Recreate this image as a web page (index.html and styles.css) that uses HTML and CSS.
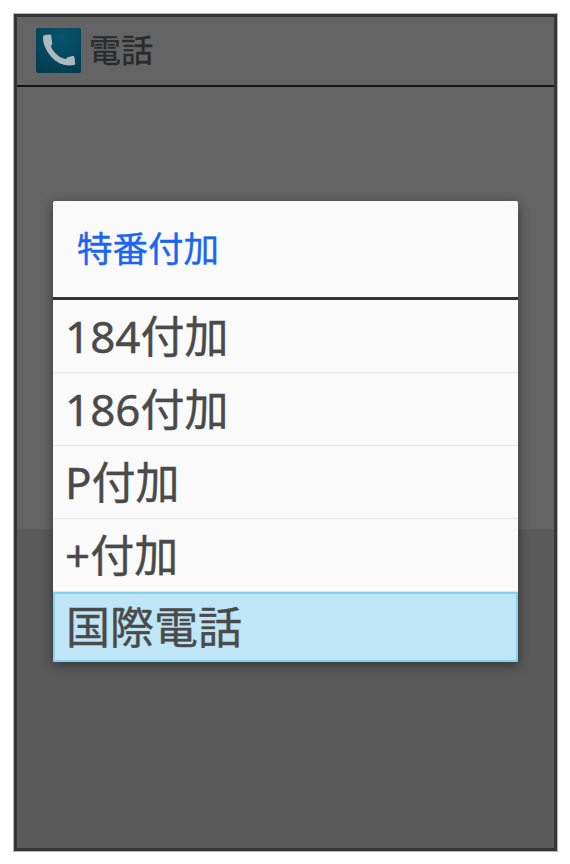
FILE: index.html
```html
<!DOCTYPE html>
<html lang="ja">
<head>
<meta charset="utf-8">
<title>特番付加</title>
<link rel="stylesheet" href="styles.css">
</head>
<body>
<div class="frame">
  <header class="bar">
    <svg class="app-icon" viewBox="0 0 45 45" aria-hidden="true">
      <defs>
        <radialGradient id="tile" cx="55%" cy="20%" r="85%">
          <stop offset="0" stop-color="#07566e"/>
          <stop offset="1" stop-color="#033c50"/>
        </radialGradient>
      </defs>
      <rect width="45" height="45" rx="2" fill="url(#tile)"/>
      <path d="M7 9 C6.800 12 7.500 15 9 19 C12 26 17 32 24 35.500 C29 37.500 34 37.800 38 37 C39 36.800 39.400 36 39.200 35 L38.500 29.500 C38.300 28.300 37.500 27.800 36.500 28 L32 29.300 C31 29.500 30.500 30.300 30 31 C25.500 30.500 20 27 16.500 21.500 C15.300 19.500 14.800 18.500 15 17.800 C15.800 17 16.300 16.300 16.200 15.200 L15.300 8 C15.200 7 14.500 6.500 13.600 6.600 L9 7 C8 7.200 7.200 8 7 9 Z" fill="#aeb9be"/>
    </svg>
    <span class="bar-title">電話</span>
  </header>
  <div class="upper"></div>
  <div class="lower"></div>
  <div class="dialog">
    <h1 class="dialog-title">特番付加</h1>
    <ul class="options">
      <li class="option">184付加</li>
      <li class="option">186付加</li>
      <li class="option">P付加</li>
      <li class="option">+付加</li>
      <li class="option option-selected">国際電話</li>
    </ul>
  </div>
</div>
</body>
</html>
```
FILE: styles.css
```css
* { box-sizing: border-box; }
html, body { margin: 0; height: 100%; background: #fff; }
body {
  padding: 14px 13px 13px 14px;
  font-family: "Noto Sans", "Noto Sans CJK JP", sans-serif;
}
.frame {
  position: relative;
  display: flex;
  flex-direction: column;
  width: 543px;
  height: 837px;
  border: 3px solid #363636;
  box-shadow: 0 0 0 1px #b4b4b4;
  background: #646464;
}
.bar {
  display: flex;
  align-items: center;
  gap: 9px;
  height: 70px;
  padding: 0 0 2px 19px;
  border-bottom: 2px solid #161616;
}
.app-icon { width: 45px; height: 45px; flex: none; }
.bar-title {
  font-size: 32px;
  line-height: 1;
  color: #2b2b2b;
  margin-left: -1px;
  -webkit-text-stroke: 0.4px #2b2b2b;
}
.upper { height: 442px; }
.lower { flex: 1; background: #5a5a5a; }
.dialog {
  position: absolute;
  left: 36px;
  top: 184px;
  width: 465px;
  background: #fafafa;
  border-radius: 2px;
  box-shadow: 0 3px 12px rgba(0, 0, 0, 0.45);
}
.dialog-title {
  margin: 0;
  height: 99px;
  padding: 0 0 5px 24px;
  display: flex;
  align-items: center;
  font-size: 35.500px;
  font-weight: 400;
  color: #1a66f0;
  -webkit-text-stroke: 0.4px #1a66f0;
  border-bottom: 3px solid #333;
}
.options { list-style: none; margin: 0; padding: 0; }
.option {
  display: flex;
  align-items: center;
  height: 73px;
  padding: 0 0 0 12px;
  font-size: 44px;
  line-height: 1;
  color: #4a4a4a;
  -webkit-text-stroke: 0.4px #4a4a4a;
  border-bottom: 1px solid #e6e6e6;
}
.option-selected {
  height: 70px;
  padding-bottom: 1px;
  background: #bfe6f6;
  border: 2px solid #83d0ef;
  border-radius: 0 0 2px 2px;
  padding-left: 11px;
  font-size: 44px;
}
```
